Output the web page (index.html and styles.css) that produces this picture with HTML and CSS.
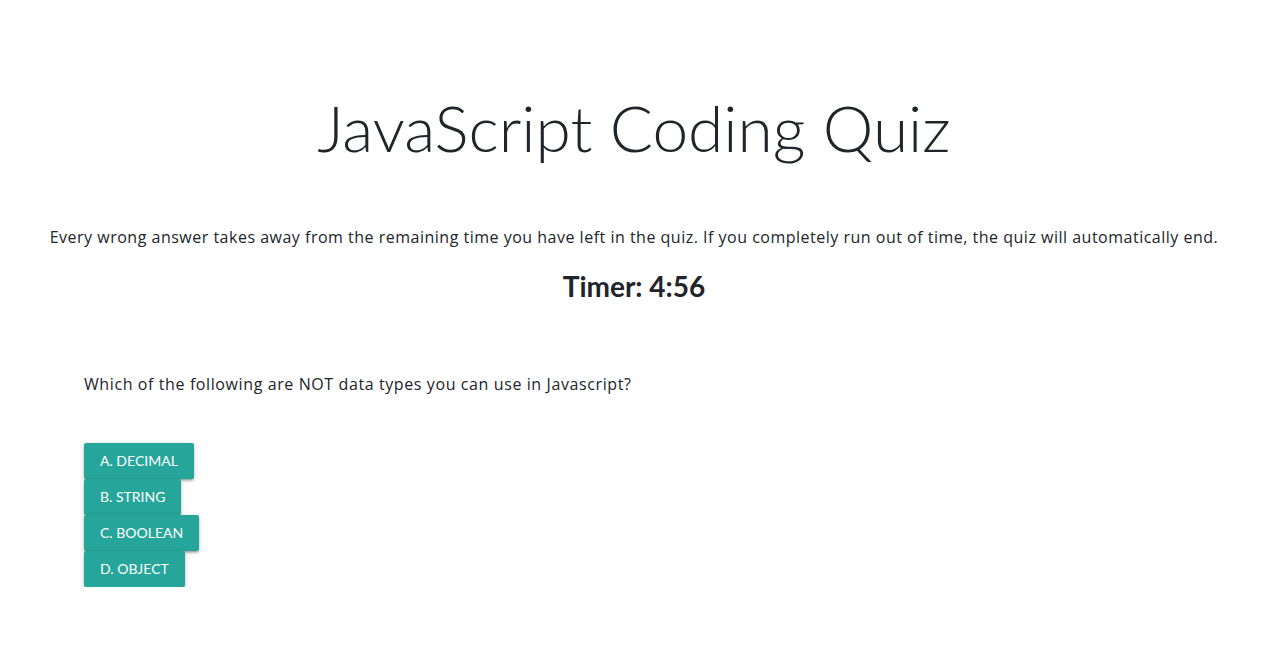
FILE: index.html
```html
<!DOCTYPE html>
<html lang="en">
<head>
<meta charset="utf-8">
<title>JavaScript Coding Quiz</title>
<link rel="stylesheet" href="styles.css">
</head>
<body>
<main class="page">
  <header class="intro">
    <h1 class="title">JavaScript Coding Quiz</h1>
    <p class="rules">Every wrong answer takes away from the remaining time you have left in the quiz. If you completely run out of time, the quiz will automatically end.</p>
    <h2 class="timer">Timer: 4:56</h2>
  </header>
  <section class="quiz">
    <p class="question">Which of the following are NOT data types you can use in Javascript?</p>
    <div class="answers">
      <button class="answer">A. Decimal</button>
      <button class="answer">B. String</button>
      <button class="answer">C. Boolean</button>
      <button class="answer">D. Object</button>
    </div>
  </section>
</main>
</body>
</html>
```
FILE: styles.css
```css
html, body {
  margin: 0;
  padding: 0;
  background: #ffffff;
}
body {
  font-family: "Open Sans", "Noto Sans", sans-serif;
  color: #212529;
  font-size: 16px;
  line-height: 1.5;
}
.page {
  padding: 0 12px 0 0;
}
.intro {
  text-align: center;
  padding-top: 90px;
}
.title {
  margin: 0;
  font-family: "Lato", sans-serif;
  font-size: 64px;
  font-weight: 300;
  line-height: 1.2;
}
.rules {
  margin: 58px 0 0;
  letter-spacing: 0.5px;
}
.timer {
  margin: 21px 0 0;
  font-family: "Lato", sans-serif;
  font-size: 28px;
  font-weight: 700;
  line-height: 1.2;
}
.quiz {
  padding: 69px 0 0 84px;
}
.question {
  margin: 0;
  letter-spacing: 0.6px;
}
.answers {
  margin-top: 47px;
  display: flex;
  flex-direction: column;
  align-items: flex-start;
}
.answer {
  font-family: "Lato", sans-serif;
  font-size: 14px;
  text-transform: uppercase;
  color: #ffffff;
  background: #26a69a;
  border: none;
  border-radius: 2px;
  height: 36px;
  line-height: 36px;
  padding: 0 16px;
  box-shadow: 0 2px 2px 0 rgba(0,0,0,0.14), 0 3px 1px -2px rgba(0,0,0,0.12), 0 1px 5px 0 rgba(0,0,0,0.2);
  cursor: pointer;
}
```
